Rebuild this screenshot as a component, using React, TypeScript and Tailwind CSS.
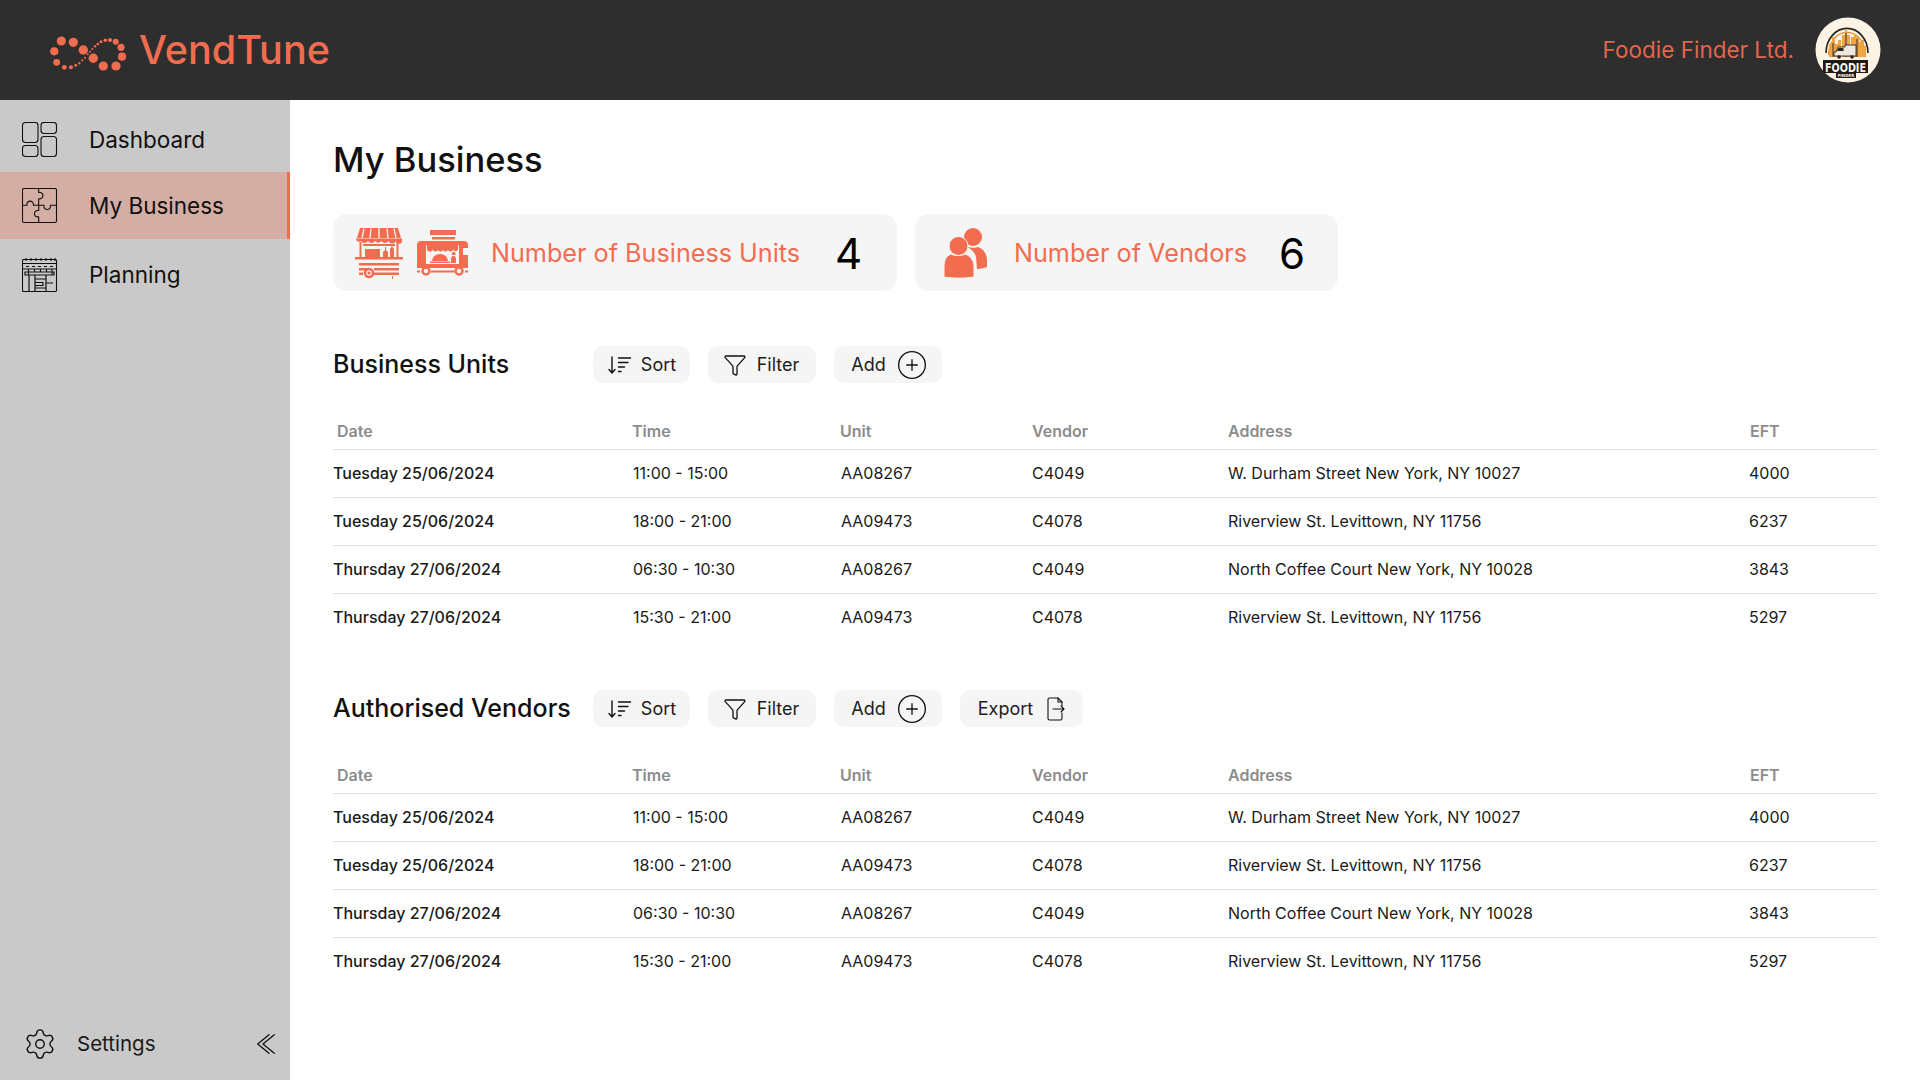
import { CirclePlus, Funnel, Settings } from "lucide-react";

const ORANGE = "#f26c4f";

const logoDots: [number, number, number][] = [
  [61.3, 36, 4.6], [73.3, 37.3, 4.6], [54.3, 46.3, 4.1], [83.3, 45, 4.7], [56.7, 57.3, 3.4], [64.3, 62.3, 2.4],
  [71, 62.3, 2], [75.7, 60.3, 1.5], [79.3, 58.3, 1.2], [82.3, 55.3, 1.1], [85, 52.7, 1], [87.7, 49.3, 1],
  [90, 46.7, 1], [92.3, 44, 1], [95, 41.3, 1.2], [97.7, 39, 1.3], [101, 36.7, 1.5], [105.3, 35.3, 1.8],
  [110, 35, 2.1], [115.7, 36.7, 3], [121, 42.3, 3.6], [122, 51.7, 4.1], [116, 61, 4.6], [103.3, 61, 4.6], [93.3, 53.3, 4.7],
];

function Logo() {
  return (
    <svg width="90" height="50" viewBox="40 20 90 50" className="shrink-0">
      {logoDots.map(([x, y, r], i) => (
        <circle key={i} cx={x} cy={y} r={r} fill={ORANGE} />
      ))}
    </svg>
  );
}

function Avatar() {
  return (
    <svg width="66" height="66" viewBox="0 0 66 66" className="shrink-0">
      <circle cx="33" cy="33" r="32.5" fill="#fdf3e5" />
      <path d="M11 36a20.500 24 0 0 1 42 0" fill="none" stroke="#2a2620" strokeWidth="1.6" />
      <path d="M13.500 38a18 22 0 0 1 37 0" fill="none" stroke="#d98a32" strokeWidth="1.2" />
      <path d="M14 40V27h3v-7h3v7h3v-4h3v17zM27 40V18h3v-5h2v5h3v22zM36 40V20h3v-3h2v3h3v20zM44 40V25h3v-2h2v6h2v11z" fill="#f0a340" />
      <path d="M30 16h2v24h-2zM17 26h2v14h-2zM41 22h2v18h-2z" fill="#2a2620" opacity=".45" />
      <path d="M21 35l2-5h7v-2h11v11H19v-4z" fill="#efe9dd" stroke="#2a2620" strokeWidth="0.9" />
      <path d="M23.500 31h5v3h-6.500z" fill="#2a2620" />
      <circle cx="24" cy="40" r="1.800" fill="#2a2620" />
      <circle cx="37" cy="40" r="1.800" fill="#2a2620" />
      <path d="M8 43h45v13H8z" fill="#1f1c18" />
      <text x="30.500" y="54.500" textAnchor="middle" fontFamily="'DejaVu Sans', sans-serif" fontWeight="700" fontSize="12" fill="#fdf3e5" textLength="41" lengthAdjust="spacingAndGlyphs">FOODIE</text>
      <rect x="21" y="56" width="20" height="5" fill="#1f1c18" />
      <text x="31" y="60" textAnchor="middle" fontFamily="'DejaVu Sans', sans-serif" fontWeight="700" fontSize="4" fill="#fdf3e5">FINDER</text>
    </svg>
  );
}

function DashboardIcon() {
  return (
    <svg width="36" height="36" viewBox="0 0 36 36" fill="none" stroke="#111" strokeWidth="1.1">
      <rect x="0.5" y="0.5" width="15.5" height="20" rx="3" />
      <rect x="19" y="0.5" width="15.5" height="11" rx="3" />
      <rect x="0.5" y="23.5" width="15.5" height="11" rx="3" />
      <rect x="19" y="14.5" width="15.5" height="20" rx="3" />
    </svg>
  );
}

function PuzzleIcon() {
  return (
    <svg width="36" height="36" viewBox="0 0 36 36" fill="none" stroke="#111" strokeWidth="1.1" strokeLinejoin="round">
      <rect x="0.5" y="0.5" width="34" height="34" rx="1.5" />
      <path d="M16.700 .5V4.500h1a3.200 3.200 0 1 1 0 6.400h-1V17.300" />
      <path d="M.5 17.300H5v-1a3.200 3.200 0 1 1 6.400 0v1H16.700" />
      <path d="M16.700 17.300H22v1a3.200 3.200 0 1 0 6.400 0v-1H34.500" />
      <path d="M16.700 17.300V22.500h-1a3.200 3.200 0 1 0 0 6.400h1V34.500" />
    </svg>
  );
}

function PlanningIcon() {
  return (
    <svg width="36" height="34" viewBox="0 0 36 34" fill="none" stroke="#111" strokeWidth="1.1">
      <rect x="0.5" y="1.5" width="34" height="32" rx="1" />
      <path d="M0.5 5.5H34.5M4 0v3M9 0v3M14 0v3M19 0v3M24 0v3M29 0v3M33 0v3" />
      <path d="M0.5 11H34.5M4 8.5h3M10 8.5h3M16 8.5h3M22 8.5h3M28 8.5h3M6.5 11v6M12.5 11v3M18.5 11v3M24.5 11v3M30 11v6" />
      <path d="M3 14h29v3H3zM7 17v16.5M13 17v16.5M24 17v16.5M13 21h11M13 24.5h8v3h-8M13 30h11M24 25h7" strokeWidth="1.2" />
    </svg>
  );
}

function CartIcon() {
  return (
    <svg width="48" height="52" viewBox="0 0 48 52" fill={ORANGE} className="shrink-0">
      <path d="M5 1h38l3 10H2z" />
      <path d="M9 1.500 7 11M16 1.500 15 11M24 1v10M32 1.500 33 11M39 1.500 41 11" stroke="#f5f5f5" strokeWidth="1.3" />
      <path d="M1 11.500h46v2a3 3 0 0 1-6 .5 4 4 0 0 1-7.500 0 4 4 0 0 1-7 0 4 4 0 0 1-6.500 0 4 4 0 0 1-7 0 4 4 0 0 1-7 0 3 3 0 0 1-5-2.500z" />
      <rect x="4.500" y="15" width="2" height="15" />
      <rect x="41.500" y="15" width="2" height="15" />
      <rect x="8" y="17" width="32" height="2" />
      <rect x="10" y="22" width="15" height="8" />
      <path d="M28 30v-5l2-2v-3h1v3l2 2v5zM35 30v-8l1.500-2v-3h1v3l1.500 2v8z" />
      <rect x="0" y="30" width="48" height="2.500" />
      <rect x="4" y="36" width="40" height="2.500" />
      <rect x="4" y="41" width="9" height="2.500" />
      <rect x="19" y="41" width="25" height="2.500" />
      <rect x="4" y="45.500" width="4" height="2.500" />
      <rect x="19" y="45.500" width="25" height="2.500" />
      <circle cx="14" cy="46" r="4" fill="none" stroke={ORANGE} strokeWidth="2.500" />
      <circle cx="14" cy="46" r="1.500" />
      <rect x="37" y="49" width="1" height="3" />
    </svg>
  );
}

function TruckIcon() {
  return (
    <svg width="51" height="46" viewBox="0 0 51 46" fill={ORANGE} className="shrink-0">
      <rect x="13" y="0" width="26" height="5" />
      <rect x="15" y="7" width="23" height="2.500" />
      <path d="M4 11h43a4 4 0 0 1 4 4v24H0V15a4 4 0 0 1 4-4z" />
      <rect x="9" y="15" width="33" height="19" fill="#f5f5f5" />
      <path d="M10 15h31v3a2.500 2.500 0 0 1-5 1 2.500 2.500 0 0 1-5 0 2.500 2.500 0 0 1-5 0 2.500 2.500 0 0 1-5 0 2.500 2.500 0 0 1-5 0 2.500 2.500 0 0 1-6-1z" />
      <path d="M15 31a8 7 0 0 1 16 0z" />
      <rect x="13" y="31.500" width="20" height="1.500" />
      <path d="M34 33v-5l1.500-2h2L39 28v5zM35.500 25a1.800 1.800 0 1 1 2.500 0z" />
      <rect x="46" y="18" width="5" height="7" fill="#f5f5f5" />
      <rect x="0" y="38" width="51" height="3" fill="#f5f5f5" />
      <rect x="0" y="40.500" width="3" height="2" />
      <rect x="14" y="40.500" width="23" height="2" />
      <rect x="48" y="40.500" width="3" height="2" />
      <circle cx="9" cy="41" r="3.500" fill="none" stroke={ORANGE} strokeWidth="2.500" />
      <circle cx="42" cy="41" r="3.500" fill="none" stroke={ORANGE} strokeWidth="2.500" />
    </svg>
  );
}

function PeopleIcon() {
  return (
    <svg width="46" height="50" viewBox="0 0 46 50" fill={ORANGE} className="shrink-0">
      <circle cx="30" cy="9" r="9" />
      <path d="M25 19c2 1 8 1 10 0 6 2 9 7 9 14v6c-3 1-7 2-10 2l-1-12c-1-5-6-9-9-10z" />
      <circle cx="15.500" cy="18" r="9.500" stroke="#f5f5f5" strokeWidth="1" />
      <path d="M1 40c0-8 2-12 7-14 3 2 11 2 14 0 6 2 9 7 9 13v10c-8 1.500-22 1.500-30 0z" stroke="#f5f5f5" strokeWidth="1" />
    </svg>
  );
}

function SortIcon() {
  return (
    <svg width="24" height="18" viewBox="0 0 24 18" fill="none" stroke="#111" strokeWidth="1.4" strokeLinecap="round" strokeLinejoin="round" className="shrink-0">
      <path d="M4 1v16M1 13.500l3 3.500 3-3.500" />
      <path d="M10.500 2h12M10.500 6.500h9.500M10.500 11h6M10.500 15.500h2.500" />
    </svg>
  );
}

function ExportIcon() {
  return (
    <svg width="24" height="24" viewBox="0 0 24 24" fill="none" stroke="#111" strokeWidth="1.1" strokeLinecap="round" strokeLinejoin="round" className="shrink-0">
      <path d="M19 8.500V5l-4-4H6.500A1.500 1.500 0 0 0 5 2.500v19A1.500 1.500 0 0 0 6.500 23h11a1.500 1.500 0 0 0 1.500-1.500V16" />
      <path d="M15 1v4h4M10 12h11M18 9l3 3-3 3" />
    </svg>
  );
}

function CollapseIcon() {
  return (
    <svg width="18" height="20" viewBox="0 0 18 20" fill="none" stroke="#111" strokeWidth="1.3" strokeLinecap="round" strokeLinejoin="round" className="ml-auto shrink-0">
      <path d="M12 .700 .7 10 12 19.300M17.300 .700 6 10 17.300 19.300" />
    </svg>
  );
}

function Pill({ children, cls }: { children: React.ReactNode; cls: string }) {
  return (
    <div className={`flex h-[37px] items-center justify-center rounded-[10px] bg-[#f5f5f5] text-[18px] text-[#1c1c1c] ${cls}`}>
      {children}
    </div>
  );
}

const rows = [
  ["Tuesday 25/06/2024", "11:00 - 15:00", "AA08267", "C4049", "W. Durham Street New York, NY 10027", "4000"],
  ["Tuesday 25/06/2024", "18:00 - 21:00", "AA09473", "C4078", "Riverview St. Levittown, NY 11756", "6237"],
  ["Thursday 27/06/2024", "06:30 - 10:30", "AA08267", "C4049", "North Coffee Court New York, NY 10028", "3843"],
  ["Thursday 27/06/2024", "15:30 - 21:00", "AA09473", "C4078", "Riverview St. Levittown, NY 11756", "5297"],
];

const heads = ["Date", "Time", "Unit", "Vendor", "Address", "EFT"];
const gridCols = "grid grid-cols-[299px_208px_192px_196px_521px_1fr]";

function Table() {
  return (
    <div className="mt-[30px]">
      <div className={`${gridCols} h-[37px] items-center border-b border-[#dedede] pb-[1px] text-[16px] font-semibold text-[#8c8c8c]`}>
        {heads.map((h, i) => (
          <div key={h} className={i === 0 ? "pl-[4px]" : i === 5 ? "pl-[1px]" : ""}>{h}</div>
        ))}
      </div>
      {rows.map((r, i) => (
        <div key={i} className={`${gridCols} h-[48px] items-center pb-[2px] text-[16px] text-[#1a1a1a] ${i < 3 ? "border-b border-[#dedede]" : ""}`}>
          {r.map((c, j) => (
            <div key={j} className={j === 0 ? "font-medium" : j === 1 || j === 2 ? "pl-[1px]" : ""}>{c}</div>
          ))}
        </div>
      ))}
    </div>
  );
}

function SectionHead({ title, exportBtn }: { title: string; exportBtn?: boolean }) {
  return (
    <div className="flex h-[37px] items-center">
      <div className="w-[260px] text-[25px] font-medium leading-none text-[#111]">{title}</div>
      <div className="flex gap-[18px]">
        <Pill cls="w-[97px] gap-[9px] pl-[1px]"><SortIcon />Sort</Pill>
        <Pill cls="w-[108px] gap-[10px] pr-[2px]"><Funnel size={24} strokeWidth={1.3} color="#111" />Filter</Pill>
        <Pill cls="w-[108px] gap-[10px] pl-[3px]">Add<CirclePlus size={32} strokeWidth={1} color="#111" /></Pill>
        {exportBtn && <Pill cls="w-[123px] gap-[10px] pl-[2px]">Export<ExportIcon /></Pill>}
      </div>
    </div>
  );
}

function NavItem({ icon, label, h, active }: { icon: React.ReactNode; label: string; h: string; active?: boolean }) {
  return (
    <div className={`flex items-center pl-[22px] text-[22.5px] text-[#111] ${h} ${active ? "border-r-[3px] border-[#f26c4f] bg-[#d4aea5]" : ""}`}>
      <div className="flex w-[67px]">{icon}</div>
      <span>{label}</span>
    </div>
  );
}

export default function App() {
  return (
    <div className="flex h-[1080px] w-[1920px] flex-col overflow-hidden bg-white font-['Inter',sans-serif]">
      <header className="flex h-[100px] shrink-0 items-center bg-[#2e2e2e] pr-[39px]">
        <div className="ml-[40px] flex items-center">
          <Logo />
          <span className="ml-[9px] pt-[1px] text-[39.500px] font-medium leading-none text-[#f26c4f]">VendTune</span>
        </div>
        <div className="ml-auto flex items-center gap-[21px]">
          <span className="text-[22.500px] text-[#e0674c]">Foodie Finder Ltd.</span>
          <Avatar />
        </div>
      </header>
      <div className="flex min-h-0 flex-1">
        <aside className="flex w-[290px] shrink-0 flex-col bg-[#c9c9c9]">
          <NavItem icon={<DashboardIcon />} label="Dashboard" h="h-[72px] pt-[8px]" />
          <NavItem icon={<PuzzleIcon />} label="My Business" h="h-[67px]" active />
          <NavItem icon={<PlanningIcon />} label="Planning" h="h-[71px]" />
          <div className="mt-auto flex h-[72px] items-center pl-[23px] pr-[15px] text-[20.500px] text-[#1a1a1a]">
            <Settings size={34} strokeWidth={1} color="#111" />
            <span className="ml-[20px]">Settings</span>
            <CollapseIcon />
          </div>
        </aside>
        <main className="min-w-0 flex-1 px-[43px] pt-[37px]">
          <h1 className="text-[34.500px] font-medium leading-[46px] text-[#111]">My Business</h1>
          <div className="mt-[31px] flex gap-[18px]">
            <div className="flex h-[77px] w-[564px] items-center rounded-[14px] bg-[#f5f5f5] pl-[22px]">
              <CartIcon />
              <div className="ml-[14px]"><TruckIcon /></div>
              <span className="ml-[23px] w-[344px] pt-[2px] text-[25.200px] text-[#f26c4f]">Number of Business Units</span>
              <span className="pt-[2px] text-[42px] leading-none text-black">4</span>
            </div>
            <div className="flex h-[77px] w-[423px] items-center rounded-[14px] bg-[#f5f5f5] pl-[28px]">
              <PeopleIcon />
              <span className="ml-[25px] w-[265px] pt-[2px] text-[25.200px] text-[#f26c4f]">Number of Vendors</span>
              <span className="pt-[2px] text-[42px] leading-none text-black">6</span>
            </div>
          </div>
          <div className="mt-[55px]">
            <SectionHead title="Business Units" />
            <Table />
          </div>
          <div className="mt-[48px]">
            <SectionHead title="Authorised Vendors" exportBtn />
            <Table />
          </div>
        </main>
      </div>
    </div>
  );
}
